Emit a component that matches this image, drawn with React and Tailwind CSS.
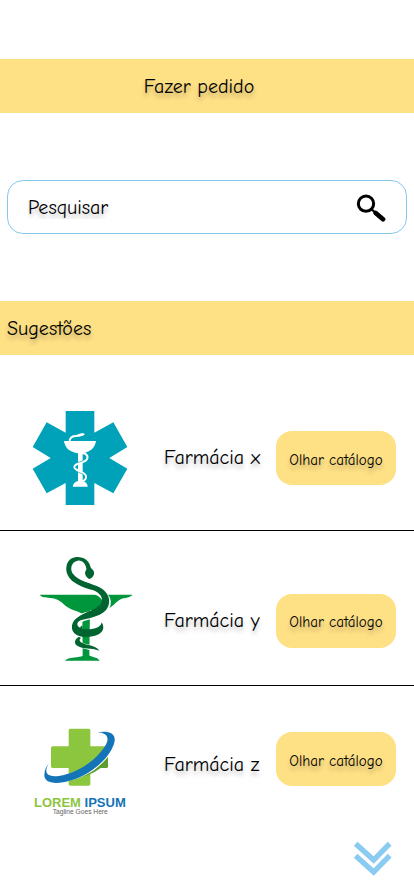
function StarOfLifeLogo() {
  return (
    <svg viewBox="36 30 312 288" className="h-24 w-[104px]" role="img" aria-label="Farmácia x">
      <path fill="#00a2ba" d="M137 33H223V98L280 67L322 141L268 174L322 206L280 280L223 249V315H137V249L80 280L38 206L92 174L38 141L80 67L137 98Z" />
      <g fill="none" stroke="#fff" strokeLinecap="round">
        <path strokeWidth="6" d="M149 121C151 112 160 108 168 108C176 108 180 104 190 103" />
        <path strokeWidth="6" d="M187 159C203 160 207 174 197 182C184 191 164 189 163 201C162 213 197 214 198 229C199 239 191 243 184 243" />
      </g>
      <path fill="#fff" d="M172 104Q184 98 195 103Q188 110 174 110ZM132 123H228C225 145 209 156 188 160V243Q202 246 203 260H158Q160 246 174 243V160C150 156 135 145 132 123Z" />
      <path d="M174 187Q184 184 190 182M175 217Q184 220 190 223" stroke="#00a2ba" strokeWidth="2" fill="none" />
    </svg>
  );
}

function HygieiaLogo() {
  return (
    <svg viewBox="6 15 312 321" className="h-[107px] w-[104px]" role="img" aria-label="Farmácia y">
      <path fill="#00963c" d="M30 134H307C304 140 293 143 280 145C256 150 250 178 220 180H180L178 316C183 322 200 320 209 332H105C113 320 152 323 158 317L157 192C145 183 119 181 101 163C87 147 70 144 55 143C42 142 32 140 30 134Z" />
      <path fill="none" stroke="#fff" strokeWidth="24" d="M190 118C214 126 240 147 227 170C218 194 171 193 147 207" />
      <path fill="#006431" d="M183 60C181 30 160 20 139 21C111 23 103 53 113 75C125 101 160 112 190 121C209 129 221 143 214 158C204 178 171 183 150 197C132 208 127 224 130 240C134 220 142 213 158 209C183 203 218 196 231 176C246 151 234 126 211 113C184 100 147 94 130 73C118 58 124 35 143 32C158 30 168 43 170 60Z" />
      <path fill="#006431" d="M174 51C181 50 186 57 191 63C196 75 185 86 177 87C166 80 162 69 168 61Z" />
      <path fill="none" stroke="#fff" strokeWidth="17" d="M140 240C149 252 184 255 205 240" />
      <path fill="#006431" d="M149 200C122 209 118 243 139 254C156 264 186 263 206 253C222 244 223 229 215 217C213 232 193 239 169 238C144 238 134 222 149 211Q158 204 171 203Z" />
      <path fill="none" stroke="#fff" strokeWidth="15" d="M141 272C146 287 165 290 186 293" />
      <path fill="#006431" d="M147 260C134 266 130 281 143 288C159 299 183 292 208 302C200 288 180 287 162 281C149 277 145 269 153 264Z" />
      <path fill="#006431" d="M157 226Q150 229 149 238L158 239Z" />
    </svg>
  );
}

function LoremLogo() {
  return (
    <svg viewBox="36 36 312 276" className="h-[92px] w-[104px] [text-shadow:none]" role="img" aria-label="Farmácia z">
      <path fill="#8cc63f" d="M151 41H206Q211 41 211 46V94H259Q264 94 264 99V154Q264 159 259 159H211V207Q211 212 206 212H151Q146 212 146 207V159H98Q93 159 93 154V99Q93 94 98 94H146V46Q146 41 151 41Z" />
      <path fill="#5d9d31" d="M264 126C240 157 206 181 155 191Q211 184 242 159H259Q264 159 264 154Z" />
      <path fill="#fff" d="M88 145C70 172 83 187 113 184C180 178 241 127 266 94C281 70 265 58 240 54L285 60L287 85C270 134 210 187 145 197L80 190Z" />
      <path fill="#1474b8" d="M87 145C69 173 82 188 116 183C171 175 222 140 252 98C273 69 261 53 232 52C262 46 287 53 284 77C277 122 217 177 154 196C105 211 72 204 73 180C73 165 80 153 87 145Z" />
      <text x="42" y="275" fontSize="39" className="font-bold [font-family:'Liberation_Sans',Arial,sans-serif]">
        <tspan fill="#8cc63f">LOREM </tspan>
        <tspan fill="#1474b8">IPSUM</tspan>
      </text>
      <text x="98" y="298" fontSize="20" fill="#666" className="[font-family:'Liberation_Sans',Arial,sans-serif]">Tagline Goes Here</text>
    </svg>
  );
}

function PharmacyRow({ name, logo, rowClass, infoClass, nameClass = "" }) {
  return (
    <li className={`flex items-center pr-[18px] pl-8 ${rowClass}`}>
      {logo}
      <div className={`flex flex-1 items-center justify-between pl-7 ${infoClass}`}>
        <h3 className={`text-xl whitespace-nowrap ${nameClass}`}>{name}</h3>
        <button
          type="button"
          className="h-[54px] w-[120px] shrink-0 rounded-2xl bg-[#fee085] pt-1 text-[15px] whitespace-nowrap [text-shadow:0_4px_4px_rgb(0_0_0/0.25)]"
        >
          Olhar catálogo
        </button>
      </div>
    </li>
  );
}

export default function App() {
  return (
    <div className="min-h-screen bg-white pt-[59px] text-black [font-family:'Comic_Neue',Lato,sans-serif] [text-shadow:0_4px_4px_rgb(0_0_0/0.25)]">
      <header className="flex h-[54px] items-center justify-center bg-[#fee085] pt-0.5 pr-4">
        <h1 className="text-xl">Fazer pedido</h1>
      </header>

      <form role="search" onSubmit={(event) => event.preventDefault()} className="mx-[7px] mt-[67px] flex h-[54px] items-center rounded-2xl border border-[#86c9ef] px-5">
        <input
          id="search"
          type="text"
          aria-label="Pesquisar"
          placeholder="Pesquisar"
          className="h-full min-w-0 flex-1 bg-transparent text-xl outline-none placeholder:text-black [text-shadow:0_4px_4px_rgb(0_0_0/0.25)]"
        />
        <button type="submit" aria-label="Buscar">
          <svg viewBox="78 63 90 90" className="size-[30px]">
            <circle cx="108" cy="98" r="23" fill="none" stroke="#000" strokeWidth="9" />
            <path d="M124 114L137 126" stroke="#000" strokeWidth="7" />
            <path d="M137 126L159 145" stroke="#000" strokeWidth="14" strokeLinecap="round" />
          </svg>
        </button>
      </form>

      <main>
        <h2 className="mt-[67px] flex h-[54px] items-center bg-[#fee085] pt-0.5 pl-[7px] text-xl">Sugestões</h2>
        <ul>
          <PharmacyRow name="Farmácia x" logo={<StarOfLifeLogo />} rowClass="border-b border-black pt-[55px] pb-6" infoClass="" />
          <PharmacyRow name="Farmácia y" logo={<HygieiaLogo />} rowClass="border-b border-black pt-6 pb-[23px]" infoClass="pt-6" />
          <PharmacyRow name="Farmácia z" logo={<LoremLogo />} rowClass="pt-[41px]" infoClass="pb-7" nameClass="pt-3" />
        </ul>
        <div className="mt-[22px] flex justify-end pr-[22px]">
          <button type="button" aria-label="Ver mais">
            <svg viewBox="610 348 117 105" className="h-[35px] w-[39px]" fill="none" stroke="#8acbf2" strokeWidth="16">
              <path d="M618 356L672 405L720 356M618 392L672 441L720 392" />
            </svg>
          </button>
        </div>
      </main>
    </div>
  );
}
